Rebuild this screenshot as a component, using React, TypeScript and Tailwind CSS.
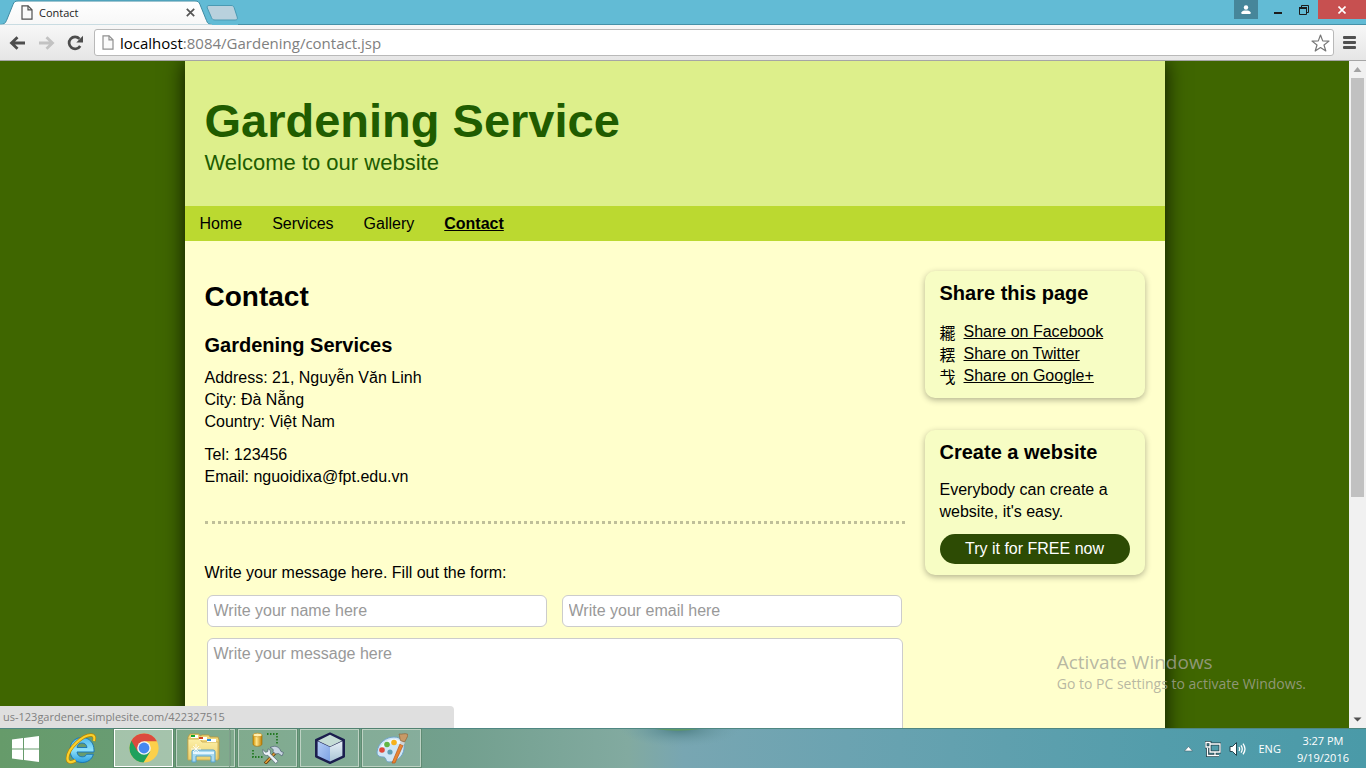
import React from "react";

const uiFont = "font-['Open_Sans','Noto_Sans',sans-serif]";
const pageFont = "font-['Liberation_Sans','Noto_Sans',Arial,sans-serif]";

function DocIcon({ className = "" }: { className?: string }) {
  return (
    <svg className={className} width="12" height="15" viewBox="0 0 12 15" fill="#fafafa" stroke="currentColor" aria-hidden="true">
      <path d="M1 .8h6l4 4v9.4H1z" strokeWidth="1.2" />
      <path d="M7 .8v4h4" fill="none" strokeWidth="1.2" />
    </svg>
  );
}

function TabStrip() {
  return (
    <div className="flex h-[25px] shrink-0 items-start bg-[#62bbd5]">
      <div className="grid h-[25px] w-[212px] shrink-0">
        <svg className="col-start-1 row-start-1" width="212" height="25" viewBox="0 0 212 25" aria-hidden="true">
          <defs>
            <linearGradient id="tab" x1="0" y1="0" x2="0" y2="1">
              <stop offset="0" stopColor="#fff" />
              <stop offset="1" stopColor="#f7f7f7" />
            </linearGradient>
          </defs>
          <path d="M0 25v-.5c4 0 5-1 6.500-4L13 4.500C14 2 15 1 18 1h177c3 0 4 1 5 3.500l6.500 16c1 3 2.500 4 5.500 4v.5z" fill="url(#tab)" stroke="#3f8ba3" />
          <path d="M0 25h212" stroke="#f7f7f7" strokeWidth="1" />
        </svg>
        <div className="col-start-1 row-start-1 flex items-center pr-4 pl-[21px]">
          <DocIcon className="text-[#505050]" />
          <span className={`ml-[6px] flex-1 text-[11px] leading-4 text-[#222] ${uiFont}`}>Contact</span>
          <button aria-label="Close tab" className="flex size-3 items-center justify-center">
            <svg width="9" height="9" viewBox="0 0 9 9" stroke="#555" strokeWidth="1.700" aria-hidden="true">
              <path d="M.8.8l7.400 7.400M8.200.8L.8 8.200" />
            </svg>
          </button>
        </div>
      </div>
      <button aria-label="New tab" className="-ml-[6px] pt-[5px]">
        <svg width="32" height="16" viewBox="0 0 32 16" aria-hidden="true">
          <path d="M3 .5h22c2 0 2.500.6 3.200 2.200l3 9.300c.6 2-.2 3-2 3H9c-2 0-3-1-3.600-2.600L1.300 3C.8 1.500 1.300.5 3 .5z" fill="#b9d1dd" stroke="#4a9ab3" />
        </svg>
      </button>
      <div className="h-[25px] flex-1 border-b border-[#4591a8]" />
      <div className="flex h-[25px] items-start border-b border-[#4591a8]">
        <button aria-label="Profile" className="flex h-[19px] w-6 items-center justify-center bg-[#46869a]">
          <svg width="10" height="10" viewBox="0 0 10 10" fill="#fff" aria-hidden="true">
            <circle cx="5" cy="2.500" r="2.200" />
            <path d="M.5 9V7.300C1 5.800 3 5.500 5 5.500s4 .3 4.500 1.800V9z" />
          </svg>
        </button>
        <button aria-label="Minimize" className="flex h-[19px] w-8 items-center justify-center pl-2">
          <svg width="8" height="10" viewBox="0 0 8 10" aria-hidden="true">
            <path d="M0 7h8v2H0z" fill="#1c1c1c" />
          </svg>
        </button>
        <button aria-label="Restore" className="flex h-[19px] w-7 items-center justify-center">
          <svg width="10" height="10" viewBox="0 0 10 10" fill="none" stroke="#1c1c1c" aria-hidden="true">
            <path d="M2.500 2V.5h7v7H8" />
            <path d="M.5 3.500h7v6h-7z" />
            <path d="M0 3h8" strokeWidth="2" />
          </svg>
        </button>
        <button aria-label="Close" className="flex h-[19px] w-12 items-center justify-center bg-[#c75050]">
          <svg width="8" height="8" viewBox="0 0 8 8" stroke="#fff" strokeWidth="1.600" aria-hidden="true">
            <path d="M.5.5l7 7M7.500.5l-7 7" />
          </svg>
        </button>
      </div>
    </div>
  );
}

function Toolbar() {
  return (
    <div className="flex h-9 shrink-0 items-center border-b border-[#a5a5a5] bg-gradient-to-b from-[#f7f7f7] to-[#e6e6e6] pr-[10px] pl-[9px]">
      <button aria-label="Back">
        <svg width="17" height="14" viewBox="0 0 17 14" fill="none" stroke="#4d4d4d" strokeWidth="2.800" aria-hidden="true">
          <path d="M16 7H3M8.500 1.200L2.500 7l6 5.800" />
        </svg>
      </button>
      <button aria-label="Forward" className="ml-3">
        <svg width="17" height="14" viewBox="0 0 17 14" fill="none" stroke="#c2c2c2" strokeWidth="2.800" aria-hidden="true">
          <path d="M1 7h13M8.500 1.200l6 5.800-6 5.800" />
        </svg>
      </button>
      <button aria-label="Reload" className="ml-3">
        <svg width="17" height="16" viewBox="0 0 17 16" aria-hidden="true">
          <path d="M13.200 11A6 6 0 1 1 12.500 3.800" fill="none" stroke="#4d4d4d" strokeWidth="2.700" />
          <path d="M16 .8v6.700H9.300z" fill="#4d4d4d" />
        </svg>
      </button>
      <div className="ml-2.5 flex h-[27px] min-w-0 flex-1 items-center rounded-[3px] border border-[#b9b9b9] bg-white px-[7px]">
        <DocIcon className="text-[#909090]" />
        <div className="ml-[6px] grid min-w-0 flex-1">
          <input
            aria-label="Address"
            defaultValue="localhost:8084/Gardening/contact.jsp"
            className={`col-start-1 row-start-1 h-6 w-full text-[15px] text-[#808080] outline-none ${uiFont}`}
          />
          <span aria-hidden="true" className={`pointer-events-none col-start-1 row-start-1 justify-self-start bg-white text-[15px] leading-6 text-black ${uiFont}`}>
            localhost
          </span>
        </div>
        <button aria-label="Bookmark this page" className="-mr-1">
          <svg width="19" height="18" viewBox="0 0 19 18" fill="#fff" stroke="#777" strokeWidth="1.200" strokeLinejoin="round" aria-hidden="true">
            <path d="M9.500 1l2.200 5.900 6.300.2-5 3.900 1.800 6-5.300-3.500L4.200 17 6 11 1 7.100l6.300-.2z" />
          </svg>
        </button>
      </div>
      <button aria-label="Menu" className="ml-[9px]">
        <svg width="13" height="14" viewBox="0 0 13 14" fill="#505050" aria-hidden="true">
          <rect y="0" width="13" height="3" rx="1" />
          <rect y="5" width="13" height="3" rx="1" />
          <rect y="10" width="13" height="3" rx="1" />
        </svg>
      </button>
    </div>
  );
}

const nav = ["Home", "Services", "Gallery"];

const shares = [
  { glyph: "䎱", label: "Share on Facebook" },
  { glyph: "䎬", label: "Share on Twitter" },
  { glyph: "𢦏", label: "Share on Google+" },
];

function SideCard({ title, children }: { title: string; children: React.ReactNode }) {
  return (
    <section className="rounded-[10px] bg-[#f7fdc4] px-[15px] pt-2 pb-[11px] shadow-[0_2px_6px_rgba(0,0,0,0.3)]">
      <h3 className="mb-[13px] text-xl leading-7 font-bold">{title}</h3>
      {children}
    </section>
  );
}

const field = "border border-[#ccc] bg-white px-[6px] text-base placeholder:text-[#999] outline-none";

function Site() {
  return (
    <div className={`min-w-0 flex-1 overflow-hidden bg-[#3f6600] text-base leading-[22px] text-black ${pageFont}`}>
      <div className="mx-auto min-h-full max-w-[980px] bg-[#ffffcc] shadow-[0_0_20px_rgba(0,0,0,0.8)]">
        <header className="h-[145px] bg-[#ddef8b] px-5 pt-8 text-[#205c00]">
          <h1 className="text-[47px] leading-14 font-bold">Gardening Service</h1>
          <p className="text-[22px] leading-7">Welcome to our website</p>
        </header>
        <nav className="flex h-[35px] items-center bg-[#bbd930]">
          {nav.map((item) => (
            <a key={item} href="#" className="px-[15px]">{item}</a>
          ))}
          <a href="#" aria-current="page" className="px-[15px] font-bold underline">Contact</a>
        </nav>
        <div className="flex gap-5 px-5 pt-[30px]">
          <main className="min-w-0 flex-1 pt-2">
            <h2 className="text-[28px] leading-9 font-bold">Contact</h2>
            <h3 className="mt-4 mb-2 text-xl leading-7 font-bold">Gardening Services</h3>
            <p>Address: 21, Nguyễn Văn Linh<br />City: Đà Nẵng<br />Country: Việt Nam</p>
            <p className="mt-[11px]">Tel: 123456<br />Email: nguoidixa@fpt.edu.vn</p>
            <hr className="mt-[33px] mb-[38px] border-0 border-t-3 border-dotted border-[#bfbf99]" />
            <form>
              <p>Write your message here. Fill out the form:</p>
              <div className="mt-[11px] flex gap-[15px] pr-[3px] pl-0.5">
                <input aria-label="Name" placeholder="Write your name here" className={`h-8 min-w-0 flex-1 rounded-md ${field}`} />
                <input aria-label="Email" type="email" placeholder="Write your email here" className={`h-8 min-w-0 flex-1 rounded-md ${field}`} />
              </div>
              <div className="mt-[11px] pr-0.5 pl-0.5">
                <textarea aria-label="Message" placeholder="Write your message here" className={`block h-40 w-full resize-none rounded-md pt-[3px] ${field}`} />
              </div>
            </form>
          </main>
          <aside className="flex w-[220px] shrink-0 flex-col gap-8">
            <SideCard title="Share this page">
              <ul className="pt-px">
                {shares.map((s) => (
                  <li key={s.label} className="flex h-[22px] items-center gap-2">
                    <span className="font-['Noto_Sans_CJK_SC',sans-serif] text-base leading-5" aria-hidden="true">{s.glyph}</span>
                    <a href="#" className="underline">{s.label}</a>
                  </li>
                ))}
              </ul>
            </SideCard>
            <SideCard title="Create a website">
              <p>Everybody can create a website, it's easy.</p>
              <a href="#" className="mt-[11px] block h-[30px] rounded-full bg-[#2d4b04] text-center leading-[30px] text-white">Try it for FREE now</a>
            </SideCard>
          </aside>
        </div>
      </div>
    </div>
  );
}

function ScrollBar() {
  return (
    <div className="flex w-[17px] shrink-0 flex-col items-center bg-[#f1f1f1]" aria-hidden="true">
      <svg width="17" height="17" viewBox="0 0 17 17"><path d="M8.500 6l4 5h-8z" fill="#a3a3a3" /></svg>
      <div className="w-[13px] flex-[419] bg-[#c1c1c1]" />
      <div className="flex-[214]" />
      <svg width="17" height="17" viewBox="0 0 17 17"><path d="M8.500 10.500l4-4h-8z" fill="#505050" /></svg>
    </div>
  );
}

function WindowsLogo() {
  return (
    <svg width="27" height="26" viewBox="0 0 27 26" fill="#fff" aria-hidden="true">
      <path d="M0 3.600L11 2v10.500H0zM12 1.900L27 0v12.500H12zM0 13.500h11V24L0 22.400zM12 13.500h15V26l-15-1.900z" />
    </svg>
  );
}

function IeLogo() {
  return (
    <svg width="32" height="32" viewBox="0 0 32 32" aria-hidden="true">
      <defs>
        <linearGradient id="ie" x1="0" y1="0" x2="0" y2="1">
          <stop offset="0" stopColor="#4db8ec" />
          <stop offset=".5" stopColor="#8fe2fb" />
          <stop offset="1" stopColor="#2b9fe0" />
        </linearGradient>
      </defs>
      <path d="M17 4.500c7.500 0 12 5.500 12 12.500v2H12c.4 3 2.300 4.800 5.200 4.800 2.200 0 3.600-.8 4.500-2.500h6.700c-1.600 5.200-5.800 8.200-11.200 8.200C10 29.500 5 24.300 5 17S10 4.500 17 4.500zm-5 10h10c-.3-2.800-2.200-4.500-5-4.500s-4.600 1.700-5 4.500z" fill="url(#ie)" stroke="#1673b4" strokeWidth=".9" fillRule="evenodd" />
      <path d="M29 8c1-3.500.3-6-3-6C18 2 3 15 2.500 25c-.2 5 4 5 8 2.500" fill="none" stroke="#b98500" strokeWidth="3.400" />
      <path d="M29 8c1-3.500.3-6-3-6C18 2 3 15 2.500 25c-.2 5 4 5 8 2.500" fill="none" stroke="#fbd12d" strokeWidth="2.200" />
    </svg>
  );
}

function ChromeLogo() {
  return (
    <svg width="30" height="30" viewBox="0 0 30 30" aria-hidden="true">
      <circle cx="15" cy="15" r="14.600" fill="#fcd04b" />
      <path d="M15 15L2.400 7.700A14.600 14.600 0 0 0 14.500 29.600L21.300 18.600z" fill="#1fa15d" />
      <path d="M15 15L2.400 7.700A14.600 14.600 0 0 1 27.900 8.200H15z" fill="#dc4b3e" />
      <path d="M2.400 7.700L8.600 18.500 11 9z" fill="#dc4b3e" />
      <circle cx="15" cy="15" r="6.800" fill="#f5f5f5" />
      <circle cx="15" cy="15" r="5.400" fill="#4688f1" />
    </svg>
  );
}

function FolderLogo() {
  return (
    <svg width="33" height="30" viewBox="0 0 33 30" aria-hidden="true">
      <defs>
        <linearGradient id="folder" x1="0" y1="0" x2="0" y2="1">
          <stop offset="0" stopColor="#fdf0a8" />
          <stop offset="1" stopColor="#ecd06c" />
        </linearGradient>
      </defs>
      <path d="M1 4l2-3h9l1 2 2-1h7l1 2h8l1 3v19H1z" fill="#efd77b" stroke="#b7973b" strokeWidth=".8" />
      <path d="M1 6h12l2 3h16v18H1z" fill="url(#folder)" stroke="#c7a74e" strokeWidth=".8" />
      <path d="M4 2h7v3H4z" fill="#fff" /><path d="M4 2h4v2H4z" fill="#14a52c" />
      <path d="M12 4h8v3h-8z" fill="#fff" /><path d="M12 4h4v2h-4z" fill="#d2441f" />
      <path d="M20 6h9v3h-9z" fill="#fff" /><path d="M20 6h4v2h-4z" fill="#2a8fdf" />
      <path d="M5 29V18.500Q5 17 7 17h19q2 0 2 1.500V29h-4v-6H9v6z" fill="#a5daf4" fillOpacity=".95" stroke="#56a2cc" />
      <path d="M6 19h21v2H6z" fill="#e3f6ff" />
      <path d="M9 11v10M4 16h10M6 13l6 6M12 13l-6 6" stroke="#fff" strokeWidth=".8" />
    </svg>
  );
}

function DatabaseToolsLogo() {
  return (
    <svg width="32" height="32" viewBox="0 0 32 32" aria-hidden="true">
      <defs>
        <linearGradient id="cylinder">
          <stop offset="0" stopColor="#d19100" /><stop offset=".4" stopColor="#ffe58a" /><stop offset="1" stopColor="#bd7c00" />
        </linearGradient>
      </defs>
      <path d="M15 2h10v10M1 18v7h11" fill="none" stroke="#247a24" strokeWidth="1.800" strokeDasharray="1.500 1.500" />
      <path d="M1 3v9c0 3 9 3 9 0V3z" fill="url(#cylinder)" stroke="#a36b00" strokeWidth=".6" />
      <ellipse cx="5.500" cy="3" rx="4.500" ry="1.800" fill="#fff0b0" stroke="#c58a10" strokeWidth=".6" />
      <path d="M13 31.500l11.500-12" stroke="#5f390c" strokeWidth="3.200" />
      <path d="M13.400 31l11-11.500" stroke="#e5a13a" strokeWidth="1.700" />
      <path d="M18 15.500c4-2 8-1.500 10 2l1 2 2.500 1-1.500 3.500-3.500-2.500-3 .5-2.500-2.500c1-2-1-3.500-3-4z" fill="#c9d6e2" stroke="#4e6072" strokeWidth=".7" />
      <path d="M11 17.500l2.500 2.800 2.300-.7.300-2.800c2.500 1 2.800 3 2 4.600l8 7.800-2.400 2.300-7.900-8.200c-3.500.8-5.500-2.300-4.800-5.800z" fill="#eef4f8" stroke="#4e6072" strokeWidth=".7" />
    </svg>
  );
}

function CubeLogo() {
  return (
    <svg width="32" height="32" viewBox="0 0 32 32" aria-hidden="true">
      <defs>
        <linearGradient id="cubeLeft" x1="0" y1="0" x2="1" y2="1">
          <stop offset="0" stopColor="#b4cdf5" /><stop offset="1" stopColor="#7da2e4" />
        </linearGradient>
        <linearGradient id="cubeRight" x1="0" y1="0" x2="0" y2="1">
          <stop offset="0" stopColor="#e8f1f8" /><stop offset="1" stopColor="#a9c4d4" />
        </linearGradient>
      </defs>
      <path d="M16 1.500L30 8v16.500L16 31 2 24.500V8z" fill="#1b1e4e" stroke="#1b1e4e" strokeWidth="2" strokeLinejoin="round" />
      <path d="M16 2.800L28 8.700 16 14.500 4 8.700z" fill="#c5ddd6" />
      <path d="M3.600 9.200L16 15v14.400L3.600 23.700z" fill="url(#cubeLeft)" />
      <path d="M28.400 9.200L16 15v14.400l12.400-5.700z" fill="url(#cubeRight)" />
    </svg>
  );
}

function PaintLogo() {
  return (
    <svg width="32" height="32" viewBox="0 0 32 32" aria-hidden="true">
      <path d="M1 20C2 11 10 5 18 5c7 0 11 5 10 12-1 8-8 13-15 13-4 0-2-5-6-5-3 0-6-1-6-5z" fill="#cfe6f6" stroke="#6fa3c9" />
      <path d="M3 19C5 12 11 7 18 7c4 0 8 2 8 7-6-5-15-3-23 5z" fill="#eef8ff" />
      <circle cx="6" cy="18" r="2.800" fill="#e0483a" /><circle cx="11" cy="12.500" r="2.800" fill="#63b544" />
      <circle cx="18" cy="10.500" r="2.800" fill="#f6b21c" /><circle cx="14" cy="20" r="2.600" fill="#5f9fb5" />
      <path d="M16 31l8-19 3 1.500-8 17.500z" fill="#e98532" stroke="#b7571a" strokeWidth=".7" />
      <path d="M23.500 11.500L25 8.500l4 2-1.500 3z" fill="#cfd4d8" />
      <path d="M24.500 8.500c-1-2-.5-4.500-1.500-6.500 3 .8 6-1.500 9 .5-.5 2.500-2 5-3.500 7.500z" fill="#c79a67" stroke="#8f6336" strokeWidth=".7" />
    </svg>
  );
}

const taskButton = "flex w-[59px] items-center justify-center border";
const idle = "border-[#bdd2c3] bg-white/15 outline outline-1 outline-[#557f66]/60";

function TaskBar() {
  return (
    <footer className={`flex h-10 shrink-0 items-stretch border-t border-[#4f8782] bg-linear-[90deg,#669b6a_0%,#6b9d7d_20%,#73a08f_34%,#82aaa0_46%,#78a6b2_50%,#6ba3b1_62%,#539dab_85%,#4a9aa8_100%] text-white ${uiFont}`}>
      <button aria-label="Start" className="flex w-[50px] items-center justify-center"><WindowsLogo /></button>
      <button aria-label="Internet Explorer" className="flex w-[62px] items-center justify-center"><IeLogo /></button>
      <div className="flex gap-[3px] pb-px pl-0.5">
        <button aria-label="Google Chrome" className={`${taskButton} border-white bg-white/40 outline outline-1 outline-[#557f66]/60`}><ChromeLogo /></button>
        <div className="flex">
          <button aria-label="File Explorer" className={`flex w-[54px] items-center justify-center border ${idle}`}><FolderLogo /></button>
          <span className={`w-[5px] border border-l-0 ${idle}`} />
        </div>
        <button aria-label="Database tools" className={`${taskButton} ${idle}`}><DatabaseToolsLogo /></button>
        <button aria-label="Development environment" className={`${taskButton} ${idle}`}><CubeLogo /></button>
        <button aria-label="Paint" className={`${taskButton} ${idle}`}><PaintLogo /></button>
      </div>
      <div className="flex-1 pl-[199px]">
        <svg width="120" height="20" viewBox="0 0 120 20" aria-hidden="true">
          <defs>
            <radialGradient id="leaf" cx="60" cy="0" r="60" gradientUnits="userSpaceOnUse" gradientTransform="scale(1 .3)">
              <stop offset="0" stopColor="#4d7f85" /><stop offset="1" stopColor="#6f9fa8" stopOpacity="0" />
            </radialGradient>
          </defs>
          <rect width="120" height="20" fill="url(#leaf)" />
          <path d="M35 0h45q-22 3.500-45 0z" fill="#5f9a68" />
        </svg>
      </div>
      <div className="flex items-center pr-[17px]">
        <button aria-label="Show hidden icons">
          <svg width="9" height="6" viewBox="0 0 9 6" aria-hidden="true"><path d="M4.500.5l4 4.500h-8z" fill="#fff" stroke="#44616b" strokeWidth=".6" /></svg>
        </button>
        <svg className="ml-3" width="16" height="16" viewBox="0 0 16 16" fill="none" aria-hidden="true">
          <path d="M5 3h10v8H5zM10 11v3M6 14.500h8M2.500 7v7.500H6M1 1.500h4V6H1z" stroke="#23434d" strokeWidth="3" />
          <path d="M5 3h10v8H5zM10 11v3M6 14.500h8M2.500 7v7.500H6M1 1.500h4V6H1z" stroke="#fff" strokeWidth="1.300" />
        </svg>
        <svg className="ml-2" width="17" height="16" viewBox="0 0 17 16" aria-hidden="true">
          <path d="M1 5.500h2.500L7.500 1.500v13l-4-4H1z" fill="#fff" stroke="#23434d" />
          <path d="M10 6q1.200 2 0 4M12 4.300q2.500 3.700 0 7.400M14 2.700q4 5.300 0 10.600" fill="none" stroke="#fff" strokeWidth="1.300" />
        </svg>
        <span className="ml-3 text-[11px] leading-4">ENG</span>
        <time className="ml-4 text-center text-[11px] leading-[17px]">3:27 PM<br />9/19/2016</time>
      </div>
    </footer>
  );
}

export default function App() {
  return (
    <div className="flex h-screen flex-col overflow-hidden">
      <TabStrip />
      <Toolbar />
      <div className="relative flex min-h-0 flex-1">
        <Site />
        <ScrollBar />
        <div className={`absolute bottom-0 left-0 h-[22px] w-[454px] rounded-tr bg-[#dfdfdf] pl-[3px] text-[11px] leading-[22px] text-[#808080] ${uiFont}`}>
          us-123gardener.simplesite.com/422327515
        </div>
        <div className={`pointer-events-none absolute right-[60px] bottom-[34px] text-[#a5a597]/80 ${uiFont}`}>
          <p className="text-[19px] leading-6">Activate Windows</p>
          <p className="text-sm leading-5">Go to PC settings to activate Windows.</p>
        </div>
      </div>
      <TaskBar />
    </div>
  );
}
